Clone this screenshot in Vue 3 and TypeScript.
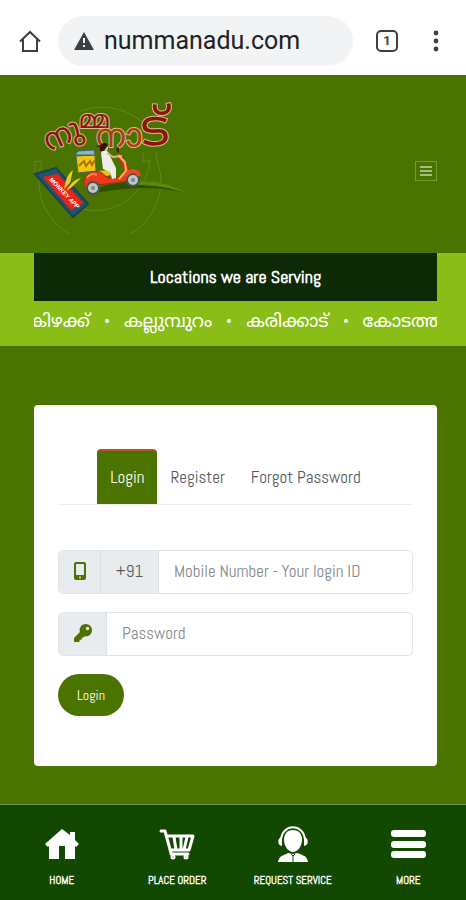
<script setup lang="ts">
import { ref } from 'vue'

type Tab = 'Login' | 'Register' | 'Forgot Password'

const tabs: Tab[] = ['Login', 'Register', 'Forgot Password']
const activeTab = ref<Tab>('Login')
const address = ref('nummanadu.com')
const mobile = ref('')
const password = ref('')
const locations: string[] = ['കിഴക്ക്', 'കല്ലുമ്പുറം', 'കരിക്കാട്', 'കോടത്ത']
</script>

<template>
  <div class="page">
    <div class="browser">
      <button class="plain" type="button" aria-label="Browser home">
        <svg width="24" height="24" viewBox="0 0 24 24" fill="none" stroke="#3c4043" stroke-width="2">
          <path d="M2 12.500 12 3l10 9.500M5 10.500V22h14V10.500" />
        </svg>
      </button>
      <div class="address">
        <svg width="20" height="18" viewBox="0 0 20 18">
          <path d="M10 0 20 18H0Z" fill="#3c4043" />
          <path d="M9 6h2v5H9zM9 13h2v2H9z" fill="#f1f3f4" />
        </svg>
        <input v-model="address" type="text" aria-label="Address" />
      </div>
      <button class="count" type="button">1</button>
      <button class="plain" type="button" aria-label="Browser menu">
        <svg width="8" height="24" viewBox="0 0 8 24" fill="#3c4043">
          <circle cx="4" cy="4" r="2.400" /><circle cx="4" cy="12" r="2.400" /><circle cx="4" cy="20" r="2.400" />
        </svg>
      </button>
    </div>

    <header class="header">
      <a class="logo" href="#">
        <svg width="160" height="140" viewBox="0 0 160 140" role="img" aria-label="നുമ്മ നാട്">
          <g fill="none" stroke="#5f8724" stroke-width="1">
            <path d="M51 17A61 61 0 0 1 119 35M127 66A61 61 0 1 1 12 68M120 66A55 55 0 0 1 24 98" />
            <path d="M12 68l-7-1 0 12 6 2M120 66l-7 2M113 68l0-9M127 66l-1-8" />
          </g>
          <g class="logo-text" paint-order="stroke" stroke="#dcbc8c" stroke-width="2" stroke-linejoin="round">
            <text x="19" y="58" font-size="31" fill="#8c1510" transform="rotate(-24 19 58)">നു</text>
            <text x="49" y="34" font-size="25" fill="#8c1510">മ്മ</text>
            <text x="66" y="53" font-size="33" fill="#ad3c0c">നാ</text>
            <text x="112" y="52" font-size="50" fill="#8c1510" transform="rotate(-4 112 52)">ട്</text>
          </g>
          <path d="M62 98C80 85 119 84 157 99 126 91 96 94 70 98Z" fill="#2d5200" />
          <path d="M104 88C124 86 142 90 158 100 140 93 124 91 104 91Z" fill="#5e870c" />
          <path d="M5 80 26 74 58 110 43 123Z" fill="#24536a" stroke="#1b4356" stroke-width="2" />
          <path d="M13 83 28 80 53 109 41 116Z" fill="#ed2115" />
          <text x="19" y="86" class="phone-text" transform="rotate(46 19 86)">MONKEY APP</text>
          <path d="M34 95C36 83 39 79 43 76L40 89ZM36 97C41 88 46 85 51 84L42 93Z" fill="#e7ce24" />
          <path d="M46 62 65 61 66 77 48 79Z" fill="#f0c50c" stroke="#45636a" />
          <path d="M45 61 48 57 64 56 65 61Z" fill="#91b3c3" stroke="#3c6472" />
          <path d="m49 72 5-5 2 5 4-5 2 4 3-5" fill="none" stroke="#a5730e" stroke-width="2" />
          <path d="M68 77l12-1 1 5-9 2Z" fill="#e3c21c" />
          <path d="M54 91C53 79 65 75 72 79L78 84 90 83C98 76 91 68 88 64L90 60 95 66 100 78C106 76 111 80 109 84L98 87 76 90 66 91 60 97Z" fill="#ed3919" stroke="#a92a10" />
          <path d="M57 84c2-4 6-5 10-3" fill="none" stroke="#ff8060" stroke-width="2" />
          <path d="M88 61l7 7 1 9-7 8" fill="none" stroke="#efb65c" stroke-width="2" />
          <path d="M71 59C74 53 80 58 80 62L86 74 86 84 82 85 80 78 73 75Z" fill="#efeee6" />
          <path d="M77 59l6 4 9-1" fill="none" stroke="#e5b291" stroke-width="2" />
          <circle cx="75" cy="54" r="3" fill="#efbd94" />
          <path d="M70 57c-1-8 5-10 8-6l-4 6ZM66 52l6-1v3Z" fill="#32160e" />
          <path d="m86 55 3-2v6l-2-1Z" fill="#342710" />
          <circle cx="63" cy="94" r="6" fill="#c0c7c4" stroke="#4a5350" stroke-width="2" />
          <circle cx="103" cy="86" r="6" fill="#c0c7c4" stroke="#4a5350" stroke-width="2" />
          <circle cx="63" cy="94" r="2" fill="#7a8480" /><circle cx="103" cy="86" r="2" fill="#7a8480" />
          <path d="M96 82c2-6 11-7 13 0" fill="none" stroke="#ef4827" stroke-width="4" />
        </svg>
      </a>
      <button class="menu" type="button" aria-label="Open menu"><span></span><span></span><span></span></button>
    </header>

    <section class="band">
      <h2>Locations we are Serving</h2>
      <div class="ticker">
        <template v-for="(place, index) in locations" :key="place">
          <i v-if="index > 0" class="dot"></i>
          <span>{{ place }}</span>
        </template>
      </div>
    </section>

    <main class="main">
      <section class="card">
        <div class="tabs" role="tablist">
          <button
            v-for="tab in tabs"
            :key="tab"
            type="button"
            role="tab"
            :aria-selected="activeTab === tab"
            :class="['tab', { active: activeTab === tab }]"
            @click="activeTab = tab"
          >{{ tab }}</button>
        </div>
        <form class="form" @submit.prevent>
          <div class="field">
            <label class="addon phone" for="mobile" aria-label="Mobile number">
              <svg width="12" height="18" viewBox="0 0 12 18">
                <path fill="#4a7300" fill-rule="evenodd" d="M2 0h8a2 2 0 0 1 2 2v14a2 2 0 0 1-2 2H2a2 2 0 0 1-2-2V2C0 1 1 0 2 0Zm0 2v11h8V2ZM6 14.500a1 1 0 0 0 0 2 1 1 0 0 0 0-2Z" />
              </svg>
            </label>
            <span class="addon code">+91</span>
            <input id="mobile" v-model="mobile" type="tel" placeholder="Mobile Number - Your login ID" />
          </div>
          <div class="field">
            <label class="addon key" for="password" aria-label="Password">
              <svg width="18" height="18" viewBox="0 0 512 512">
                <path fill="#4a7300" d="M512 176c0 97-79 176-176 176-11 0-22-1-33-3l-24 27c-4 5-11 8-18 8h-37v40c0 13-11 24-24 24h-40v40c0 13-11 24-24 24H24c-13 0-24-11-24-24v-78c0-6 3-13 7-17l162-162c-6-17-9-36-9-55C160 79 239 0 336 0s176 79 176 176ZM336 128a48 48 0 1 0 96 0 48 48 0 1 0-96 0Z" />
              </svg>
            </label>
            <input id="password" v-model="password" type="password" placeholder="Password" />
          </div>
          <button class="submit" type="submit">Login</button>
        </form>
      </section>
    </main>

    <nav class="bottom">
      <a href="#">
        <svg width="36" height="36" viewBox="0 0 36 36" fill="#fff">
          <path d="M18 3 26 9V6h5v8l4 4-3 3-1-1v13H21V20h-6v13H5V20l-1 1-3-3Z" />
        </svg>
        <span>HOME</span>
      </a>
      <a href="#">
        <svg width="36" height="36" viewBox="0 0 36 36" fill="none" stroke="#fff" stroke-width="3" stroke-linejoin="round" stroke-linecap="round">
          <path d="M2 5h4l6 22M8 10h26l-4 14H11M12 28h17M15 11l2 13M22 11v13M28 11l-3 13" />
          <circle cx="14" cy="31" r="1" /><circle cx="27" cy="31" r="1" />
        </svg>
        <span>PLACE ORDER</span>
      </a>
      <a href="#">
        <svg width="36" height="36" viewBox="0 0 36 36" fill="#fff">
          <path d="M6 14C7-3 29-3 30 14" fill="none" stroke="#fff" stroke-width="2" />
          <path d="M18 4C12 4 9 8 9 14c0 7 5 12 9 12s9-5 9-12c0-6-3-10-9-10Z" />
          <path d="M7 11c-5 0-5 9 0 9ZM29 11c5 0 5 9 0 9ZM3 36c1-7 7-7 10-9l5 1 5-1c3 2 9 2 10 9Z" />
          <path d="M18 29v7M16 28l2 2 2-2" fill="none" stroke="#124800" />
        </svg>
        <span>REQUEST SERVICE</span>
      </a>
      <a href="#">
        <svg width="36" height="36" viewBox="0 0 36 36" fill="#fff">
          <rect x="1" y="4" width="35" height="7" rx="3" /><rect x="1" y="15" width="35" height="7" rx="3" /><rect x="1" y="25" width="35" height="7" rx="3" />
        </svg>
        <span>MORE</span>
      </a>
    </nav>
  </div>
</template>

<style>
body {
  background: #4a7300;
}
</style>

<style scoped>
.page {
  display: flex;
  flex-direction: column;
  min-height: 100vh;
  background: #4a7300;
  font-family: Abel, "Noto Sans Malayalam", Roboto, sans-serif;
}

.page *,
.page {
  box-sizing: border-box;
}

button,
input {
  margin: 0;
  border: 0;
  padding: 0;
  background: none;
  font: inherit;
  color: inherit;
}

svg {
  display: block;
  flex: none;
}

.browser {
  display: flex;
  align-items: center;
  height: 75px;
  padding: 6px 26px 0 18px;
  background: #fff;
}

.address {
  display: flex;
  flex: 1;
  align-items: center;
  gap: 10px;
  min-width: 0;
  height: 50px;
  margin: 0 23px 0 16px;
  padding: 0 16px;
  border-radius: 25px;
  background: #f1f3f4;
}

.address input {
  width: 100%;
  min-width: 0;
  font-family: Roboto, sans-serif;
  font-size: 25px;
  color: #202124;
}

.count {
  width: 22px;
  height: 22px;
  margin-right: 34px;
  border: 2px solid #3c4043;
  border-radius: 5px;
  font: 700 13px Roboto, sans-serif;
  color: #3c4043;
}

.header {
  display: flex;
  align-items: center;
  justify-content: space-between;
  height: 178px;
  padding: 0 29px 0 30px;
}

.menu {
  display: flex;
  flex-direction: column;
  align-items: center;
  justify-content: center;
  gap: 2px;
  width: 22px;
  height: 20px;
  margin-top: 14px;
  border: 1px solid #729b38;
}

.menu span {
  width: 12px;
  height: 2px;
  background: #a4bf7c;
}

.logo-text {
  font-family: "Noto Sans Malayalam", sans-serif;
}

.phone-text {
  font: italic 700 6px "Liberation Sans", sans-serif;
  fill: #fff;
}

.band {
  height: 93px;
  padding: 0 29px 0 34px;
  background: #8abd18;
}

.band h2 {
  margin: 0;
  background: #0e2906;
  font-size: 18px;
  font-weight: 700;
  line-height: 48px;
  text-align: center;
  color: #fff;
}

.ticker {
  display: flex;
  align-items: center;
  justify-content: center;
  gap: 15px;
  height: 40px;
  overflow: hidden;
  font-size: 18px;
  white-space: nowrap;
  color: #fff;
}

.dot {
  flex: none;
  width: 4px;
  height: 4px;
  border-radius: 50%;
  background: #fff;
}

.main {
  flex: 1;
  padding: 59px 29px 38px 34px;
}

.card {
  padding: 44px 24px 50px;
  border-radius: 4px;
  background: #fff;
}

.tabs {
  display: flex;
  justify-content: center;
  border-bottom: 1px solid #eceeef;
}

.tab {
  height: 55px;
  padding: 0 13px 2px;
  border-top: 2px solid transparent;
  border-radius: 4px 4px 0 0;
  font-size: 17px;
  color: #55595c;
}

.tab.active {
  border-top-color: #b95427;
  background: #4a7300;
  color: #fff;
}

.form {
  display: flex;
  flex-direction: column;
  align-items: flex-start;
  gap: 18px;
  padding-top: 45px;
}

.field {
  display: flex;
  width: 100%;
  height: 44px;
  overflow: hidden;
  border: 1px solid #e1e4e7;
  border-radius: 5px;
}

.addon {
  display: flex;
  align-items: center;
  justify-content: center;
  padding-bottom: 2px;
  border-right: 1px solid #dce0e4;
  background: #e9ecef;
  font-size: 17px;
  color: #55595c;
}

.phone {
  width: 42px;
}

.code {
  width: 58px;
}

.key {
  width: 48px;
}

.field input {
  flex: 1;
  min-width: 0;
  padding: 0 15px 2px;
  font-size: 17px;
  color: #55595c;
}

.field input::placeholder {
  color: #858a8e;
  opacity: 1;
}

.submit {
  width: 66px;
  height: 42px;
  border-radius: 21px;
  background: #4a7300;
  font-size: 14px;
  color: #fff;
}

.bottom {
  display: grid;
  grid-template-columns: repeat(4, 1fr);
  height: 96px;
  padding-left: 4px;
  border-top: 1px solid #6d925b;
  background: #124800;
}

.bottom a {
  display: flex;
  flex-direction: column;
  align-items: center;
  gap: 11px;
  padding-top: 21px;
  font-size: 11px;
  font-weight: 700;
  line-height: 14px;
  text-decoration: none;
  white-space: nowrap;
  color: #fff;
}
</style>
